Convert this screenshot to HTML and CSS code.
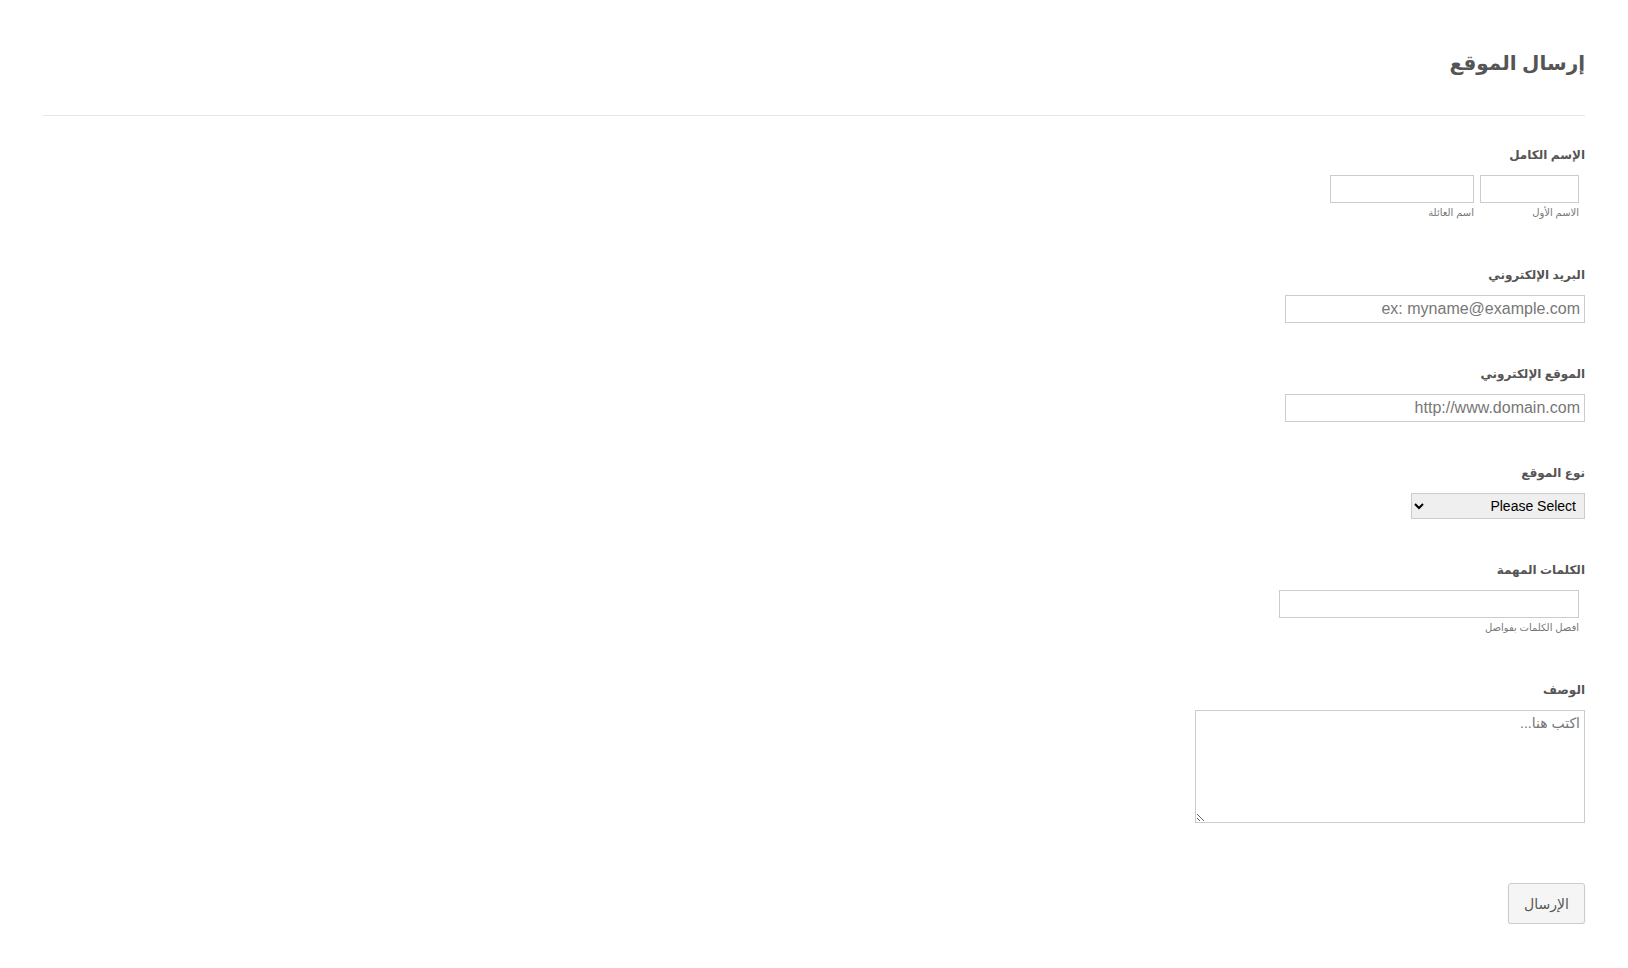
FILE: index.html
```html
<!DOCTYPE html>
<html lang="ar" dir="rtl">
<head>
    <meta charset="UTF-8">
    <meta name="viewport" content="width=device-width, initial-scale=1.0">
    <title>إرسال الموقع</title>
    <link rel="stylesheet" href="styles.css">
</head>
<body>
    <form class="form-all">
        <div class="form-header">
            <h1>إرسال الموقع</h1>
        </div>

        <ul class="form-section">
            <li class="form-line">
                <label class="form-label">الإسم الكامل</label>
                <div class="name-row">
                    <span class="name-part">
                        <input type="text" class="input-first">
                        <span class="sublabel">الاسم الأول</span>
                    </span>
                    <span class="name-part">
                        <input type="text" class="input-last">
                        <span class="sublabel">اسم العائلة</span>
                    </span>
                </div>
            </li>

            <li class="form-line">
                <label class="form-label">البريد الإلكتروني</label>
                <input type="email" class="input-wide" placeholder="ex: myname@example.com">
            </li>

            <li class="form-line">
                <label class="form-label">الموقع الإلكتروني</label>
                <input type="text" class="input-wide" placeholder="http://www.domain.com">
            </li>

            <li class="form-line">
                <label class="form-label">نوع الموقع</label>
                <select class="form-select">
                    <option>Please Select</option>
                </select>
            </li>

            <li class="form-line">
                <label class="form-label">الكلمات المهمة</label>
                <div class="indented">
                    <input type="text" class="input-wide">
                    <span class="sublabel">افصل الكلمات بفواصل</span>
                </div>
            </li>

            <li class="form-line">
                <label class="form-label">الوصف</label>
                <textarea class="form-textarea" placeholder="اكتب هنا..."></textarea>
            </li>

            <li class="form-buttons">
                <button type="button" class="submit-button">الإرسال</button>
            </li>
        </ul>
    </form>
</body>
</html>
```

FILE: styles.css
```css
body {
    margin: 0;
    padding: 0;
    background: #fff;
    color: #555;
    font-family: 'Liberation Sans', 'DejaVu Sans', Arial, sans-serif;
    direction: rtl;
}

.form-all {
    padding: 0 43px;
}

.form-header {
    padding-top: 48px;
    padding-bottom: 37px;
    border-bottom: 1px solid #e6e6e6;
}

.form-header h1 {
    margin: 0;
    font-size: 20px;
    line-height: 30px;
    font-weight: bold;
    color: #555;
}

.form-section {
    list-style: none;
    margin: 30px 0 0;
    padding: 0;
}

.form-line {
    margin-bottom: 42px;
}

.form-label {
    display: block;
    font-size: 12px;
    font-weight: bold;
    line-height: 18px;
    margin-bottom: 11px;
    color: #555;
}

input,
textarea,
select {
    font-family: 'Liberation Sans', 'DejaVu Sans', Arial, sans-serif;
    box-sizing: border-box;
}

input[type="text"],
input[type="email"] {
    height: 28px;
    border: 1px solid #ccc;
    background: #fff;
    padding: 0 4px;
    font-size: 16px;
    color: #333;
    outline: none;
}

input::placeholder,
textarea::placeholder {
    color: #777;
}

.name-row {
    display: flex;
    gap: 6px;
    padding-right: 6px;
}

.name-part {
    display: flex;
    flex-direction: column;
}

.input-first {
    width: 99px;
}

.input-last {
    width: 144px;
}

.sublabel {
    display: block;
    margin-top: 3px;
    padding-bottom: 4px;
    font-size: 10px;
    line-height: 14px;
    color: #777;
}

.input-wide {
    width: 300px;
}

.indented {
    padding-right: 6px;
}

.form-select {
    width: 174px;
    height: 26px;
    border: 1px solid #ccc;
    background: #efefef;
    font-size: 14px;
    color: #000;
    padding: 0 4px;
}

.form-textarea {
    display: block;
    width: 390px;
    height: 113px;
    border: 1px solid #ccc;
    padding: 4px;
    font-size: 14px;
    resize: both;
    outline: none;
}

.form-buttons {
    padding-top: 18px;
}

.submit-button {
    height: 41px;
    width: 77px;
    border: 1px solid #ccc;
    border-radius: 3px;
    background: #f5f5f5;
    color: #555;
    font-family: 'Liberation Sans', 'DejaVu Sans', Arial, sans-serif;
    font-size: 14px;
    box-shadow: 0 1px 2px rgba(0, 0, 0, 0.08);
}
```
